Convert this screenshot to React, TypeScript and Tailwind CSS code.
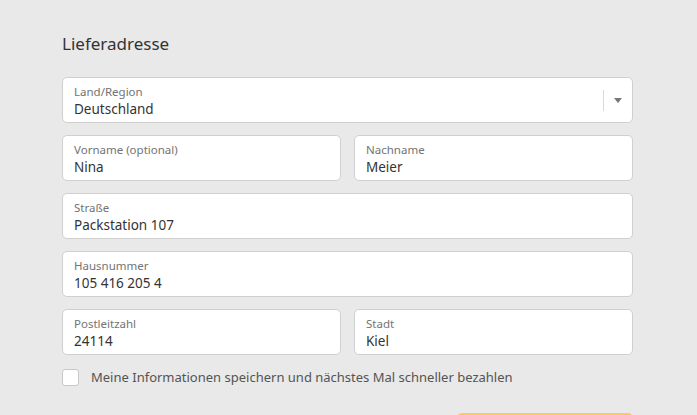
const font = { fontFamily: '"Noto Sans", "Open Sans", sans-serif' };

function Field({ label, value, select = false }: { label: string; value: string; select?: boolean }) {
  return (
    <div className="relative flex h-[46px] w-full flex-col justify-center rounded-[5px] border border-[#d0d0d0] bg-white px-[11px] pt-[1px]">
      <span className="text-[11.5px] leading-[16px] text-[#737373]">{label}</span>
      <span className="text-[13.5px] leading-[18px] text-[#333]">{value}</span>
      {select && (
        <div className="absolute right-0 top-0 flex h-full items-center">
          <div className="h-[21px] w-px bg-[#d9d9d9]" />
          <div className="flex w-[28px] justify-center">
            <div className="h-0 w-0 border-x-[4.5px] border-t-[5px] border-x-transparent border-t-[#777]" />
          </div>
        </div>
      )}
    </div>
  );
}

export default function App() {
  return (
    <div className="h-[415px] w-[697px] overflow-hidden bg-[#e9e9e9]" style={font}>
      <div className="ml-[62px] w-[571px] pt-[31px]">
        <h2 className="mb-[21px] text-[17px] leading-[25px] text-[#333]">Lieferadresse</h2>

        <div className="flex flex-col gap-[12px]">
          <Field label="Land/Region" value="Deutschland" select />
          <div className="grid grid-cols-2 gap-[13px]">
            <Field label="Vorname (optional)" value="Nina" />
            <Field label="Nachname" value="Meier" />
          </div>
          <Field label="Straße" value="Packstation 107" />
          <Field label="Hausnummer" value="105 416 205 4" />
          <div className="grid grid-cols-2 gap-[13px]">
            <Field label="Postleitzahl" value="24114" />
            <Field label="Stadt" value="Kiel" />
          </div>
        </div>

        <label className="mt-[13px] flex items-center gap-[12px]">
          <span className="h-[17px] w-[17px] rounded-[3px] border border-[#c8c8c8] bg-white" />
          <span className="text-[13px] leading-[18px] text-[#545454]">
            Meine Informationen speichern und nächstes Mal schneller bezahlen
          </span>
        </label>

        <div className="mt-[27px] flex justify-end">
          <button className="h-[48px] w-[176px] rounded-[5px] bg-[#fdc860]" />
        </div>
      </div>
    </div>
  );
}
